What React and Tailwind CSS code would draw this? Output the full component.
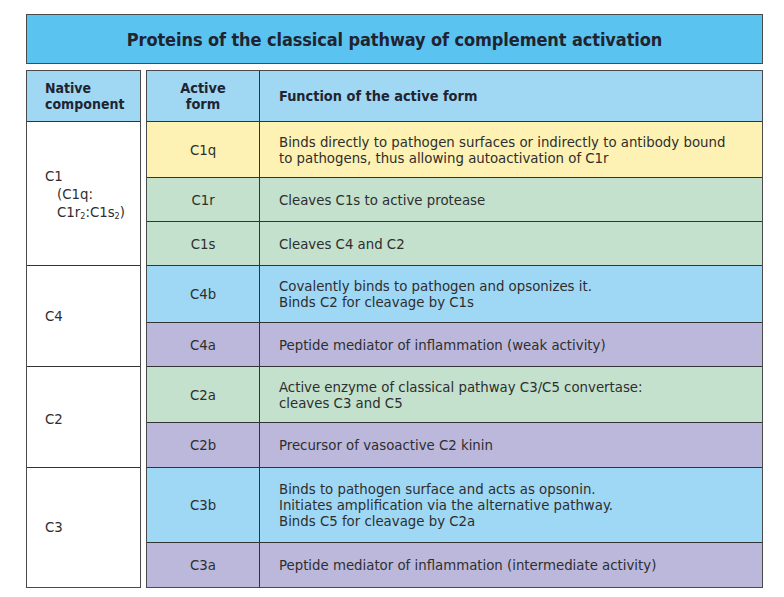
import React from "react";

const font = {
  fontFamily: '"DejaVu Sans Condensed", "Liberation Sans", sans-serif',
};

const rows = [
  { a: "C1q", f: ["Binds directly to pathogen surfaces or indirectly to antibody bound", "to pathogens, thus allowing autoactivation of C1r"], bg: "bg-[#fdf2b3]", h: "h-[56px]" },
  { a: "C1r", f: ["Cleaves C1s to active protease"], bg: "bg-[#c3e1cd]", h: "h-[44px]" },
  { a: "C1s", f: ["Cleaves C4 and C2"], bg: "bg-[#c3e1cd]", h: "h-[44px]" },
  { a: "C4b", f: ["Covalently binds to pathogen and opsonizes it.", "Binds C2 for cleavage by C1s"], bg: "bg-[#9fd8f5]", h: "h-[57px]" },
  { a: "C4a", f: ["Peptide mediator of inflammation (weak activity)"], bg: "bg-[#bcb8dc]", h: "h-[44px]" },
  { a: "C2a", f: ["Active enzyme of classical pathway C3/C5 convertase:", "cleaves C3 and C5"], bg: "bg-[#c3e1cd]", h: "h-[56px]" },
  { a: "C2b", f: ["Precursor of vasoactive C2 kinin"], bg: "bg-[#bcb8dc]", h: "h-[45px]" },
  { a: "C3b", f: ["Binds to pathogen surface and acts as opsonin.", "Initiates amplification via the alternative pathway.", "Binds C5 for cleavage by C2a"], bg: "bg-[#9fd8f5]", h: "h-[75px]" },
  { a: "C3a", f: ["Peptide mediator of inflammation (intermediate activity)"], bg: "bg-[#bcb8dc]", h: "h-[44px]" },
];

export default function App() {
  return (
    <div className="w-[784px] h-[597px] bg-white text-[#2e2e2e]" style={font}>
      <div className="pl-[26px] pt-[14px] w-[763px]">
        <div className="h-[50px] bg-[#5bc3f0] border-[1.5px] border-[#4a4a4a] flex items-center justify-center">
          <span className="text-[18px] font-bold text-[#1f2430] tracking-[-0.1px]">
            Proteins of the classical pathway of complement activation
          </span>
        </div>
        <div className="mt-[6px] flex gap-[5px]">
          {/* Left table */}
          <div className="w-[115px] border-[1.5px] border-[#4a4a4a] flex flex-col">
            <div className="h-[51px] bg-[#a0d8f4] border-b border-[#333] flex flex-col justify-center pl-[18px] text-[14px] leading-[16px] font-bold text-[#1f2430]">
              <span>Native</span>
              <span>component</span>
            </div>
            <div className="h-[144px] border-b border-[#333] flex flex-col justify-center pl-[18px] text-[14.8px] leading-[18px]">
              <span>C1</span>
              <span className="pl-[12px]">(C1q:</span>
              <span className="pl-[12px]">
                C1r<sub className="text-[9px]">2</sub>:C1s<sub className="text-[9px]">2</sub>)
              </span>
            </div>
            <div className="h-[101px] border-b border-[#333] flex items-center pl-[18px] text-[14.8px]">C4</div>
            <div className="h-[101px] border-b border-[#333] flex items-center pl-[18px] text-[14.8px] pt-[5px]">C2</div>
            <div className="flex-1 flex items-center pl-[18px] text-[14.8px]">C3</div>
          </div>
          {/* Right table */}
          <div className="flex-1 border-[1.5px] border-[#4a4a4a] flex flex-col">
            <div className="h-[51px] bg-[#a0d8f4] border-b border-[#333] flex text-[14.4px] leading-[16px] font-bold text-[#1f2430]">
              <div className="w-[113px] border-r border-[#333] flex flex-col items-center justify-center">
                <span>Active</span>
                <span>form</span>
              </div>
              <div className="flex-1 flex items-center pl-[19px]">Function of the active form</div>
            </div>
            {rows.map((r, i) => (
              <div
                key={r.a}
                className={`${r.h} ${r.bg} flex text-[14.8px] leading-[16px] ${i < rows.length - 1 ? "border-b border-[#333]" : ""}`}
              >
                <div className="w-[113px] border-r border-[#333] flex items-center justify-center">{r.a}</div>
                <div className="flex-1 flex flex-col justify-center pl-[19px]">
                  {r.f.map((t) => (
                    <span key={t}>{t}</span>
                  ))}
                </div>
              </div>
            ))}
          </div>
        </div>
      </div>
    </div>
  );
}
